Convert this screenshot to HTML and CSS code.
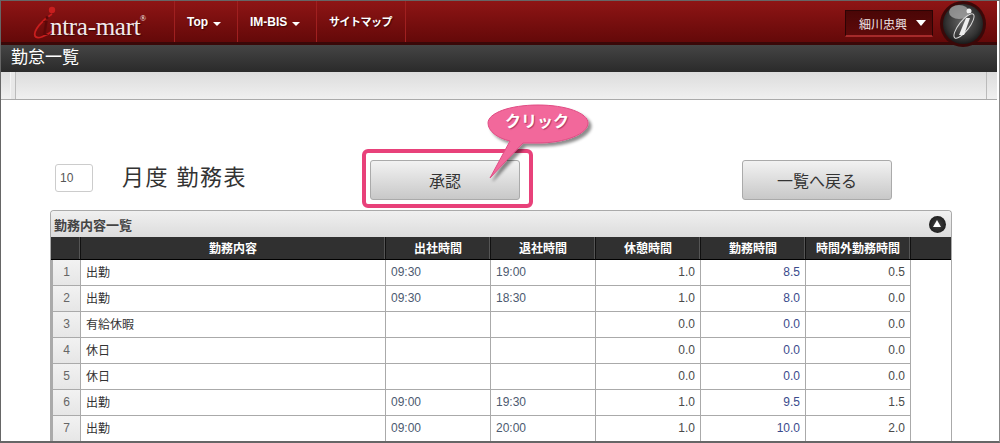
FILE: index.html
```html
<!DOCTYPE html>
<html lang="ja">
<head>
    <meta charset="UTF-8">
    <title>勤怠一覧</title>
    <link rel="stylesheet" href="styles.css">
</head>
<body>

<div class="frame">

    <!-- top red bar -->
    <div class="header">
        <div class="logo">
            <svg class="logo-ring" width="40" height="36" viewBox="0 0 40 36">
                <path d="M20 8 C10 14 1 25 3 30 C5 34 14 30 22 24" fill="none" stroke="#c81e1e" stroke-width="1.8"/>
                <circle cx="20" cy="4" r="3.2" fill="#c81e1e"/>
            </svg>
            <span class="logo-i">i</span><span class="logo-text">ntra-mart</span><sup class="logo-r">®</sup>
        </div>
        <div class="nav-item">Top<span class="caret"></span></div>
        <div class="nav-item nav-imbis">IM-BIS<span class="caret"></span></div>
        <div class="nav-item nav-map">サイトマップ</div>
        <div class="header-right">
            <div class="user-box">細川忠興<span class="user-caret"></span></div>
            <svg class="avatar" width="46" height="46" viewBox="0 0 46 46">
                <defs>
                    <radialGradient id="ball" cx="50%" cy="45%" r="55%">
                        <stop offset="0" stop-color="#666"/>
                        <stop offset="0.75" stop-color="#333"/>
                        <stop offset="1" stop-color="#1a1a1a"/>
                    </radialGradient>
                </defs>
                <circle cx="23" cy="23" r="23" fill="#3a0808"/>
                <circle cx="23" cy="23" r="20" fill="url(#ball)"/>
                <ellipse cx="19" cy="11" rx="10" ry="7" fill="#aaa" opacity="0.75"/>
                <ellipse cx="24" cy="25" rx="15" ry="5" transform="rotate(-52 24 25)" fill="none" stroke="#ddd" stroke-width="1"/>
                <path d="M26 17 L30 17 L24 34 L19 34 Z" fill="#eee"/>
                <circle cx="29" cy="10" r="2.5" fill="#eee"/>
            </svg>
        </div>
    </div>

    <div class="subtitle">勤怠一覧</div>

    <div class="toolbar"><div class="toolbar-inner"></div></div>

    <div class="main">
        <div class="title-row">
            <input class="month-input" type="text" value="10">
            <div class="title">月度 勤務表</div>
            <button class="btn">承認</button>
            <button class="btn btn-back">一覧へ戻る</button>
        </div>

        <div class="panel">
            <div class="panel-head">
                <span>勤務内容一覧</span>
                <span class="toggle"></span>
            </div>
            <table class="work-table">
                <colgroup>
                    <col class="col-no">
                    <col class="col-kind">
                    <col class="col-val">
                    <col class="col-val">
                    <col class="col-val">
                    <col class="col-val">
                    <col class="col-val">
                    <col class="col-gutter">
                </colgroup>
                <thead>
                    <tr>
                        <th></th>
                        <th>勤務内容</th>
                        <th>出社時間</th>
                        <th>退社時間</th>
                        <th>休憩時間</th>
                        <th>勤務時間</th>
                        <th>時間外勤務時間</th>
                        <th></th>
                    </tr>
                </thead>
                <tbody>
                    <tr><td class="no">1</td><td>出勤</td><td class="time">09:30</td><td class="time">19:00</td><td class="num">1.0</td><td class="num blue">8.5</td><td class="num">0.5</td></tr>
                    <tr><td class="no">2</td><td>出勤</td><td class="time">09:30</td><td class="time">18:30</td><td class="num">1.0</td><td class="num blue">8.0</td><td class="num">0.0</td></tr>
                    <tr><td class="no">3</td><td>有給休暇</td><td></td><td></td><td class="num">0.0</td><td class="num blue">0.0</td><td class="num">0.0</td></tr>
                    <tr><td class="no">4</td><td>休日</td><td></td><td></td><td class="num">0.0</td><td class="num blue">0.0</td><td class="num">0.0</td></tr>
                    <tr><td class="no">5</td><td>休日</td><td></td><td></td><td class="num">0.0</td><td class="num blue">0.0</td><td class="num">0.0</td></tr>
                    <tr><td class="no">6</td><td>出勤</td><td class="time">09:00</td><td class="time">19:30</td><td class="num">1.0</td><td class="num blue">9.5</td><td class="num">1.5</td></tr>
                    <tr><td class="no">7</td><td>出勤</td><td class="time">09:00</td><td class="time">20:00</td><td class="num">1.0</td><td class="num blue">10.0</td><td class="num">2.0</td></tr>
                </tbody>
            </table>
        </div>
    </div>

    <!-- pink annotation over the approve button -->
    <div class="mark"></div>
    <svg class="bubble" width="116" height="86" viewBox="0 0 116 86">
        <defs>
            <filter id="drop" x="-10%" y="-10%" width="125%" height="130%">
                <feDropShadow dx="3" dy="3" stdDeviation="1.5" flood-color="#000" flood-opacity="0.45"/>
            </filter>
        </defs>
        <path d="M3 18 C3 8 25 0 53 0 C81 0 103 8 103 18 C103 29 80 38 53 38 L38 38 L5 73 L25 36 C12 33 3 26 3 18 Z" fill="#f2689b" stroke="#e04c84" stroke-width="1" filter="url(#drop)"/>
    </svg>
    <div class="bubble-text">クリック</div>

</div>

</body>
</html>
```

FILE: styles.css
```css
* {
    box-sizing: border-box;
}

body {
    margin: 0;
    padding: 0;
    background-color: #ffffff;
    font-family: "Liberation Sans", "Noto Sans CJK JP", sans-serif;
    font-size: 12px;
    color: #333;
    overflow: hidden;
}

.frame {
    position: relative;
    width: 1000px;
    height: 443px;
    padding-right: 2px;
    border-top: 1px solid #666;
    border-left: 1px solid #666;
    border-right: 1px solid #888;
    border-bottom: 2px solid #666;
    overflow: hidden;
}

/* red bar */
.header {
    display: flex;
    height: 44px;
    background: linear-gradient(#8e1515, #640909);
    border-bottom: 3px solid #3a0808;
    color: #fff;
}

.logo {
    position: relative;
    width: 174px;
    padding: 11px 0 0 49px;
    font-family: "Liberation Serif", serif;
    font-size: 25px;
    line-height: 30px;
    white-space: nowrap;
    border-right: 1px solid #a02020;
}

.logo-ring {
    position: absolute;
    left: 31px;
    top: 5px;
}

.logo-i {
    position: absolute;
    left: 40px;
    top: 9px;
    font-size: 30px;
    font-style: italic;
    color: #5c0808;
}

.logo-text {
    position: relative;
    color: #f2eaea;
    text-shadow: 1px 1px 1px #3a0808;
    letter-spacing: -0.3px;
}

.logo-r {
    position: absolute;
    top: 13px;
    left: 139px;
    font-size: 8px;
    line-height: 10px;
}

.nav-item {
    padding: 13px 0 0 12px;
    width: 63px;
    font-weight: bold;
    font-size: 12px;
    line-height: 16px;
    border-right: 1px solid #a02020;
    text-shadow: 1px 1px 1px #3a0808;
}

.nav-imbis {
    width: 79px;
}

.nav-map {
    width: 89px;
    font-size: 11px;
    letter-spacing: -0.5px;
}

.caret {
    display: inline-block;
    margin-left: 5px;
    vertical-align: 0;
    border-top: 4px solid #fff;
    border-left: 4px solid transparent;
    border-right: 4px solid transparent;
}

.header-right {
    display: flex;
    margin-left: auto;
    padding-top: 0;
}

.user-box {
    display: flex;
    align-items: center;
    width: 88px;
    height: 27px;
    margin-top: 9px;
    padding-left: 13px;
    background: linear-gradient(#4a0606, #5e0a0a);
    border: 1px solid #2c0404;
    border-bottom: 2px solid #a52a2a;
    color: #f0e6e6;
    font-size: 12px;
}

.user-caret {
    margin-left: 9px;
    border-top: 6px solid #fff;
    border-left: 5px solid transparent;
    border-right: 5px solid transparent;
}

.avatar {
    margin: 0 11px 0 7px;
}

/* dark title bar */
.subtitle {
    height: 27px;
    padding-left: 10px;
    background: linear-gradient(#454545, #2a2a2a);
    color: #fff;
    font-size: 17px;
    line-height: 26px;
}

.toolbar {
    height: 28px;
    padding: 0 10px 0 9px;
    background: linear-gradient(#dcdcdc, #f0f0f0);
    border-bottom: 1px solid #aaa;
}

.toolbar-inner {
    height: 100%;
    border-left: 1px solid #f4f4f4;
    border-right: 1px solid #bbb;
    box-shadow: inset 4px 0 0 #e8e8e8, inset 5px 0 0 #bbb;
}

/* content */
.main {
    padding: 60px 0 0 49px;
}

.title-row {
    display: flex;
    align-items: flex-start;
    height: 40px;
    padding-left: 5px;
}

.month-input {
    width: 38px;
    height: 28px;
    margin-top: 4px;
    padding: 0 4px;
    border: 1px solid #ccc;
    border-radius: 3px;
    font-family: "Liberation Sans", sans-serif;
    font-size: 12px;
    color: #555;
}

.title {
    width: 248px;
    margin-left: 29px;
    font-size: 22px;
    line-height: 36px;
    letter-spacing: 1.5px;
    color: #333;
}

.btn {
    width: 150px;
    height: 40px;
    padding: 0;
    background: linear-gradient(#f2f2f2, #c8c8c8);
    border: 1px solid #aaa;
    border-radius: 3px;
    font-family: "Liberation Sans", "Noto Sans CJK JP", sans-serif;
    font-size: 16px;
    color: #333;
}

.btn-back {
    margin-left: 222px;
}

.panel {
    width: 902px;
    margin-top: 10px;
    border: 1px solid #aaa;
    border-bottom: none;
    border-radius: 4px 4px 0 0;
}

.panel-head {
    display: flex;
    justify-content: space-between;
    align-items: center;
    height: 26px;
    padding: 0 5px 0 3px;
    background: linear-gradient(#f0f0f0, #dcdcdc);
    font-size: 13px;
    font-weight: bold;
    color: #444;
    border-radius: 4px 4px 0 0;
}

.toggle {
    position: relative;
    width: 17px;
    height: 17px;
    border-radius: 50%;
    background: radial-gradient(#444, #111);
}

.toggle::after {
    content: "";
    position: absolute;
    left: 4px;
    top: 4px;
    border-bottom: 7px solid #fff;
    border-left: 4.5px solid transparent;
    border-right: 4.5px solid transparent;
}

.work-table {
    width: 900px;
    table-layout: fixed;
    border-collapse: separate;
    border-spacing: 0;
}

.col-no {
    width: 30px;
}

.col-kind {
    width: 305px;
}

.col-val {
    width: 105px;
}

.col-gutter {
    width: 40px;
}

.work-table th {
    height: 23px;
    padding: 0 0 2px;
    background-color: #303030;
    color: #fff;
    font-size: 12px;
    font-weight: bold;
    text-align: center;
    border-right: 1px solid #111;
    border-bottom: 1px solid #000;
    box-shadow: inset -1px 0 0 #555;
}

.work-table th:last-child {
    border-right: none;
    box-shadow: none;
}

.work-table td {
    height: 26px;
    padding: 0 5px 2px;
    color: #333;
    white-space: nowrap;
    border-right: 1px solid #aaa;
    border-bottom: 1px solid #aaa;
}

.work-table td.no {
    text-align: center;
    background: linear-gradient(#f2f2f2, #e6e6e6);
    border-left: 2px solid #aaa;
    color: #666;
}

.time {
    color: #4c5a70 !important;
}

.num {
    text-align: right;
    color: #4a4a4a !important;
}

.blue {
    color: #3a4a8c !important;
}

/* annotation */
.mark {
    position: absolute;
    left: 361px;
    top: 148px;
    width: 171px;
    height: 59px;
    border: 4px solid #e8417a;
    border-radius: 6px;
}

.bubble {
    position: absolute;
    left: 484px;
    top: 104px;
    overflow: visible;
}

.bubble-text {
    position: absolute;
    left: 504px;
    top: 111px;
    font-size: 16px;
    line-height: 20px;
    font-weight: bold;
    color: #fff;
    text-shadow: 1px 1px 1px #b03a68;
}
```
